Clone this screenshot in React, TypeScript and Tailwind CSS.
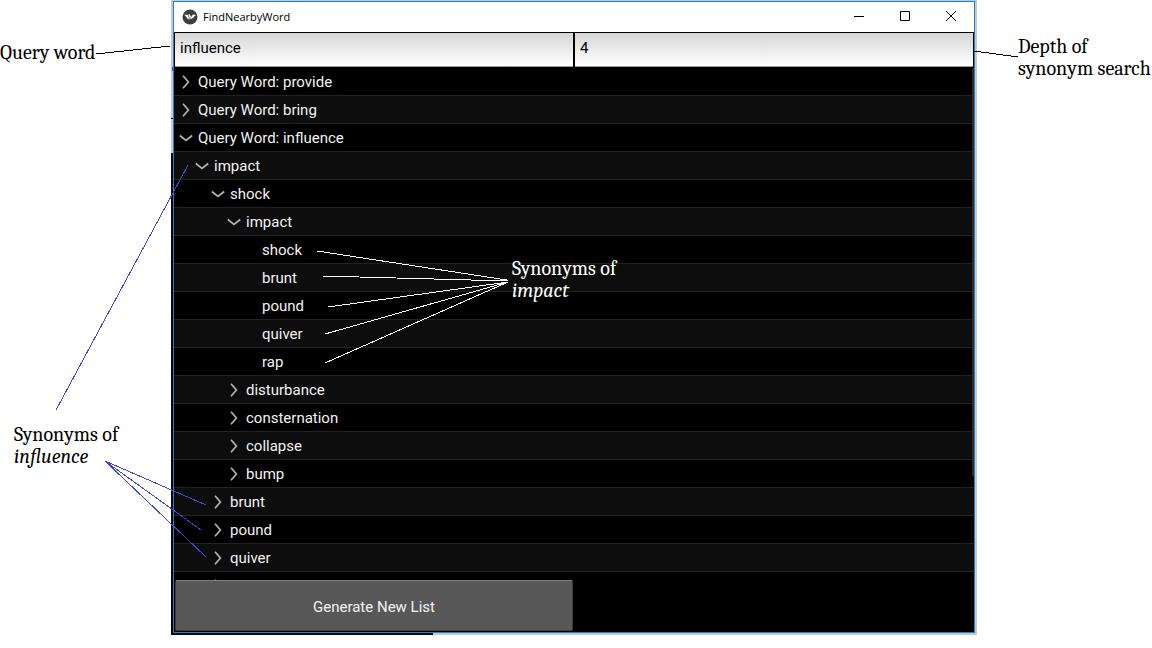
import { Fragment, useState } from "react";

type Word = { label: string; children?: Word[]; leaf?: boolean; open?: boolean };

const leaf = (label: string): Word => ({ label, leaf: true });

const queries: Word[] = [
  { label: "Query Word: provide" },
  { label: "Query Word: bring" },
  {
    label: "Query Word: influence",
    open: true,
    children: [
      {
        label: "impact",
        open: true,
        children: [
          {
            label: "shock",
            open: true,
            children: [
              {
                label: "impact",
                open: true,
                children: [leaf("shock"), leaf("brunt"), leaf("pound"), leaf("quiver"), leaf("rap")],
              },
              { label: "disturbance" },
              { label: "consternation" },
              { label: "collapse" },
              { label: "bump" },
            ],
          },
          { label: "brunt" },
          { label: "pound" },
          { label: "quiver" },
          { label: "" },
        ],
      },
    ],
  },
];

const indents = ["pl-[5px]", "pl-[21px]", "pl-[37px]", "pl-[53px]", "pl-[69px]"];
const rowClass =
  "flex h-7 w-full items-center gap-[5px] border-b border-[#222] text-left text-[15px] text-[#f2f2f2] group-odd:bg-black group-even:bg-[#0d0d0d]";

function Chevron({ open }: { open: boolean }) {
  return (
    <svg viewBox="0 0 14 14" className="size-3.5 shrink-0" fill="none" stroke="#b4b4b4" strokeWidth="1.7" aria-hidden="true">
      <path d={open ? "M0.8 4.5 L7 9.5 L13.2 4.5" : "M4 0.8 L9.4 7 L4 13.2"} />
    </svg>
  );
}

type Row = { word: Word; level: number; path: string };

function flatten(words: Word[], isOpen: (path: string, word: Word) => boolean, level = 0, parent = ""): Row[] {
  return words.flatMap((word, i) => {
    const path = `${parent}/${i}`;
    const rest = word.children && isOpen(path, word) ? flatten(word.children, isOpen, level + 1, path) : [];
    return [{ word, level, path }, ...rest];
  });
}

function SynonymTree() {
  const [toggled, setToggled] = useState<Record<string, boolean>>({});
  const isOpen = (path: string, word: Word) => toggled[path] ?? word.open ?? false;
  return (
    <div className="relative">
      <ul className="h-[512px] overflow-hidden">
        {flatten(queries, isOpen).map(({ word, level, path }) => (
          <li key={path} className="group">
            {word.leaf ? (
              <div className={`${rowClass} ${indents[level]}`}>
                <span className="w-3.5" />
                <span className="pt-0.5">{word.label}</span>
              </div>
            ) : (
              <button
                type="button"
                aria-expanded={isOpen(path, word)}
                onClick={() => setToggled({ ...toggled, [path]: !isOpen(path, word) })}
                className={`${rowClass} ${indents[level]}`}
              >
                <Chevron open={isOpen(path, word)} />
                <span className="pt-0.5">{word.label}</span>
              </button>
            )}
          </li>
        ))}
      </ul>
      <div className="absolute top-0 right-0 h-[408px] w-0.5 bg-[#2c2c2c]" />
    </div>
  );
}

function TitleBar() {
  return (
    <header className="flex h-[30px] items-center bg-white pl-2">
      <svg viewBox="0 0 16 16" className="size-4" aria-hidden="true">
        <circle cx="8" cy="8" r="7.5" fill="#3c3f41" />
        <path d="M2.4 5.4 L5.6 6 L7 8.4 L6.4 10.8 Z" fill="#fff" />
        <path d="M6 5.6 L7.8 5.2 L9.2 8 L7.6 11 L7.4 8.4 Z" fill="#e6e6e6" />
        <path d="M9 8.2 L11 5.6 L14.2 6 L12.6 7 L11.4 8.8 L8.6 10.2 Z" fill="#fff" />
      </svg>
      <h1 className="ml-[5px] flex-1 font-['Open_Sans',sans-serif] text-[11px] text-black">FindNearbyWord</h1>
      <div className="flex h-full">
        {[
          { name: "Minimize", d: "M0 5.5 H10" },
          { name: "Maximize", d: "M0.5 0.5 H9.5 V9.5 H0.5 Z" },
          { name: "Close", d: "M0 0 L10 10 M10 0 L0 10" },
        ].map(({ name, d }) => (
          <button key={name} type="button" aria-label={name} className="flex w-[46px] items-center justify-center pb-0.5">
            <svg viewBox="0 0 10 10" className="size-2.5" fill="none" stroke="#000" strokeWidth="1">
              <path d={d} />
            </svg>
          </button>
        ))}
      </div>
    </header>
  );
}

const inputClass =
  "h-[34px] w-full min-w-0 border-b border-[#999] bg-linear-to-b from-[#d6d6d6] to-white px-[5px] pb-1 text-[15px] text-black outline-none";

function AppWindow() {
  return (
    <main className="min-w-0 bg-[#c8c8c8] bg-[linear-gradient(to_right,#000_262px,#c8c8c8_262px)] bg-size-[100%_482px] bg-bottom bg-no-repeat px-0.5 pt-px pb-0.5">
      <div className="border border-[#1883d7] bg-black font-[Roboto,sans-serif]">
        <TitleBar />
        <div className="grid grid-cols-2 gap-0.5 bg-black px-px pt-px pb-px">
          <input aria-label="Query word" defaultValue="influence" className={inputClass} />
          <input aria-label="Depth of synonym search" defaultValue="4" className={inputClass} />
        </div>
        <SynonymTree />
        <div className="grid grid-cols-2 gap-0.5 px-px pb-px">
          <button
            type="button"
            className="h-[51px] rounded-xs border border-[#3c3c3c] border-t-[#808080] bg-[#585858] pt-[3px] text-[15px] text-[#f2f2f2]"
          >
            Generate New List
          </button>
        </div>
      </div>
    </main>
  );
}

type Line = [number, number, number, number];

function Pointers({ lines, color }: { lines: Line[]; color: string }) {
  return (
    <svg className="pointer-events-none absolute top-0 left-0 h-full w-full overflow-visible" stroke={color} strokeWidth="1" shapeRendering="crispEdges" aria-hidden="true">
      {lines.map(([x1, y1, x2, y2]) => (
        <line key={`${x1},${y1},${x2},${y2}`} x1={x1} y1={y1} x2={x2} y2={y2} />
      ))}
    </svg>
  );
}

function Note({ lines, emphasis, className }: { lines: string[]; emphasis?: string; className: string }) {
  return (
    <p className={`absolute font-[Cambria,'Noto_Serif','Liberation_Serif',serif] text-xl leading-[22px] whitespace-nowrap ${className}`}>
      {lines.map((line, i) => (
        <Fragment key={line}>
          {i > 0 && <br />}
          {line}
        </Fragment>
      ))}
      {emphasis && (
        <>
          <br />
          <em>{emphasis}</em>
        </>
      )}
    </p>
  );
}

export default function App() {
  return (
    <div className="relative grid min-h-screen grid-cols-[171px_1fr_175px] items-start bg-white">
      <aside />
      <AppWindow />
      <aside className="relative h-full">
        <Pointers color="#000" lines={[[-3, 51, 41, 57]]} />
        <Note lines={["Depth of", "synonym search"]} className="top-9 left-[41px] text-black" />
      </aside>
      <Pointers color="#000" lines={[[96, 54, 170, 46], [171, 118, 173, 118]]} />
      <Pointers
        color="#3f48cc"
        lines={[
          [56, 410, 188, 165],
          [105, 461, 206, 505],
          [105, 461, 201, 530],
          [105, 461, 206, 557],
          [172, 67, 172, 71],
        ]}
      />
      <Pointers
        color="#fff"
        lines={[
          [317, 251, 507, 280],
          [322, 276, 508, 281],
          [328, 307, 508, 282],
          [325, 334, 508, 282],
          [325, 363, 508, 282],
        ]}
      />
      <Note lines={["Query word"]} className="top-[42px] left-0 text-black" />
      <Note lines={["Synonyms of"]} emphasis="influence" className="top-[424px] left-3.5 text-black" />
      <Note lines={["Synonyms of"]} emphasis="impact" className="top-[258px] left-[512px] text-white" />
    </div>
  );
}
